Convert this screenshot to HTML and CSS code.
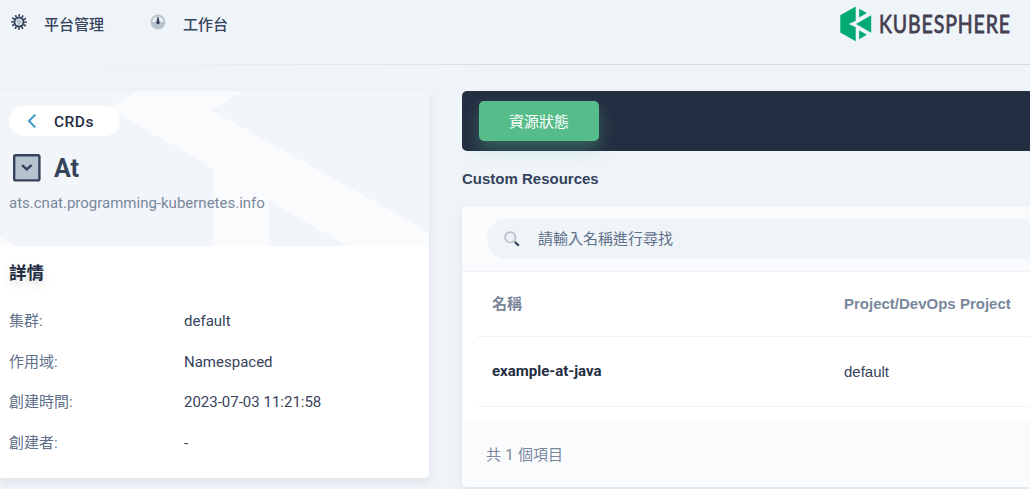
FILE: index.html
```html
<!DOCTYPE html>
<html lang="zh-Hant">
<head>
<meta charset="utf-8">
<title>KubeSphere</title>
<link rel="stylesheet" href="styles.css">
</head>
<body>
<header class="header">
  <nav class="nav">
    <a class="nav-item">
      <svg class="nav-icon" viewBox="0 0 16 16"><circle cx="8" cy="8" r="6.6" fill="none" stroke="#36435c" stroke-width="2.4" stroke-dasharray="1.7 1.756" stroke-dashoffset=".85"/><circle cx="8" cy="8" r="4.6" fill="#e5eaf0" stroke="#36435c" stroke-width="2"/><circle cx="8" cy="8" r="2.4" fill="#b6c2cd"/></svg>
      <span>平台管理</span>
    </a>
    <a class="nav-item">
      <svg class="nav-icon" viewBox="0 0 16 16"><circle cx="8" cy="8" r="7.4" fill="#b6c2cd"/><path d="M2.2 8a5.8 5.8 0 0 1 11.6 0z" fill="#e8edf3"/><path d="M7.6 2.8h.8l1.3 5.7a1.7 1.7 0 1 1-3.4 0z" fill="#36435c"/></svg>
      <span>工作台</span>
    </a>
  </nav>
  <svg class="logo" viewBox="0 0 176 36">
    <g fill="#00aa72"><path d="M15.7.5v14.3L8.7 18l7 3.3v14L.3 26.6V9.2z"/><path d="M19.1 2.7 26.8 7.1 19.1 11.6z"/><path d="M31.2 9.2v17.5L16 18z"/><path d="M19.1 24.3 26.8 28.8 19.1 33.2z"/></g>
    <text class="wordmark" transform="translate(39 27) scale(.78 1)" textLength="168" lengthAdjust="spacing">KUBESPHERE</text>
  </svg>
</header>
<main class="content">
  <aside class="detail">
    <div class="hero">
      <svg class="hero-mark" viewBox="0 0 429 155"><path d="M108 17 138 0H244L211 19 429 141v14h-81l-79-45v45h-56V77zM0 146l16 9H0z" fill="#fafbfd"/></svg>
      <a class="back"><svg class="back-icon" viewBox="0 0 10 16"><path d="M8.3 1.6 2 8l6.3 6.4" fill="none" stroke="#3d95c8" stroke-width="2"/></svg><span class="back-label">CRDs</span></a>
      <h1 class="name"><svg class="name-icon" viewBox="0 0 28 28"><rect x="1.2" y="1.2" width="25.2" height="25.2" rx="1.5" fill="#b6c2cd" stroke="#36435c" stroke-width="2.4"/><path d="m9 11.2 4.8 4.3 4.8-4.3" fill="none" stroke="#36435c" stroke-width="2.4"/></svg><span class="name-label">At</span></h1>
      <p class="desc">ats.cnat.programming-kubernetes.info</p>
    </div>
    <div class="attrs">
      <h2 class="attrs-title">詳情</h2>
      <dl class="attr-list">
        <dt>集群:</dt><dd>default</dd>
        <dt>作用域:</dt><dd>Namespaced</dd>
        <dt>創建時間:</dt><dd>2023-07-03 11:21:58</dd>
        <dt>創建者:</dt><dd>-</dd>
      </dl>
    </div>
  </aside>
  <section class="resources">
    <div class="tabs"><button class="tab">資源狀態</button></div>
    <h3 class="section-title">Custom Resources</h3>
    <div class="table-card">
      <div class="toolbar">
        <div class="search">
          <svg class="search-icon" viewBox="0 0 16 16"><circle cx="6.3" cy="6.3" r="5.2" fill="#eef1f5" stroke="#b6bfca" stroke-width="1.7"/><path d="m10 10 1.8 1.8" stroke="#b6bfca" stroke-width="1.5"/><path d="m11 11 3.8 3.8" stroke="#36435c" stroke-width="2.3"/></svg>
          <span>請輸入名稱進行尋找</span>
        </div>
      </div>
      <div class="table">
        <div class="row row-head"><span>名稱</span><span>Project/DevOps Project</span></div>
        <div class="row"><strong>example-at-java</strong><span class="project">default</span></div>
      </div>
      <div class="footer">共 1 個項目</div>
    </div>
  </section>
</main>
</body>
</html>
```
FILE: styles.css
```css
* { box-sizing: border-box; }
body {
  margin: 0;
  width: 1030px;
  height: 489px;
  overflow: hidden;
  background: #eff4f9;
  color: #242e42;
  font: 15px/20px Roboto, "Noto Sans CJK TC", sans-serif;
}
h1, h2, h3, p, dl, dd { margin: 0; }

.header {
  display: flex;
  justify-content: space-between;
  height: 65px;
  padding: 6px 14px 0 11px;
  border-bottom: 1px solid;
  border-image: linear-gradient(90deg, #eff4f9 10%, #d8dee5 50%, #d5dbe3) 1;
}
.nav { display: flex; gap: 46px; padding-top: 8px; }
.nav-item { display: flex; gap: 17px; height: 22px; font-weight: 500; line-height: 22px; color: #36435c; }
.nav-icon { width: 16px; height: 16px; }
.logo { width: 176px; height: 36px; overflow: visible; }
.wordmark { font: 400 25px Lato, sans-serif; fill: #453f52; stroke: #453f52; stroke-width: .8px; stroke-linejoin: round; }

.content { display: flex; gap: 33px; padding-top: 26px; }
.detail {
  flex: none;
  width: 429px;
  height: 387px;
  border-radius: 0 5px 5px 0;
  overflow: hidden;
  background: #fff;
  box-shadow: 0 5px 10px rgba(36, 46, 66, .08);
}
.hero { position: relative; height: 155px; padding: 15px 9px 0; background: #f2f5fa; }
.hero-mark { position: absolute; inset: 0; width: 429px; height: 155px; }
.back {
  position: relative;
  display: flex;
  align-items: center;
  gap: 17px;
  width: 111px;
  height: 30px;
  padding-left: 18px;
  border-radius: 15px;
  background: #fff;
  font-size: 15.5px;
  font-weight: 500;
  letter-spacing: .5px;
}
.back-label { padding-top: 2px; }
.back-icon { width: 10px; height: 16px; }
.name {
  position: relative;
  display: flex;
  align-items: center;
  gap: 13px;
  margin-top: 17px;
  padding-left: 4px;
  height: 30px;
  font-size: 25px;
  font-weight: 700;
  color: #36435c;
}
.name-label { padding-top: 2px; }
.name-icon { width: 28px; height: 28px; }
.desc { position: relative; margin-top: 10px; color: #79879c; }
.attrs { padding: 15px 9px; }
.attrs-title { height: 24px; font-size: 17.5px; line-height: 24px; text-shadow: 0 4px 8px rgba(36, 46, 66, .15); }
.attr-list { display: grid; grid-template-columns: 175px 1fr; grid-auto-rows: 20px; row-gap: 20.6px; margin-top: 26px; }
.attr-list dt { color: #5f708a; }
.attr-list dd { color: #36435c; }

.resources { flex: 1; min-width: 0; }
.tabs {
  height: 60px;
  padding: 10px 17px;
  border-radius: 5px 0 0 5px;
  background: #242e42;
}
.tab {
  width: 120px;
  height: 40px;
  padding: 0 0 2px;
  border: 0;
  border-radius: 5px;
  background: #55bc8a;
  box-shadow: 0 8px 16px rgba(85, 188, 138, .36);
  color: #fff;
  font: 15px "Noto Sans CJK TC", sans-serif;
}
.section-title { margin: 18px 0 17px; font: 700 15px/20px "Liberation Sans", sans-serif; color: #36435c; }
.table-card {
  border-radius: 5px 0 0 5px;
  overflow: hidden;
  background: #fff;
  box-shadow: 0 4px 8px rgba(36, 46, 66, .08);
}
.toolbar { height: 66px; padding: 13px 0 0 25px; border-bottom: 1px solid #eff2f7; background: #f9fbfd; }
.search {
  display: flex;
  align-items: center;
  gap: 18px;
  height: 40px;
  padding-left: 17px;
  border-radius: 20px 0 0 20px;
  background: #eff4f9;
  color: #5f708a;
}
.search-icon { width: 16px; height: 16px; }
.table { padding: 0 0 14px 15px; }
.row {
  display: grid;
  grid-template-columns: 352px 1fr;
  align-items: center;
  height: 70px;
  padding-left: 15px;
  border-bottom: 1px solid #eff2f7;
}
.row-head { height: 65px; font: 700 15px/20px "Liberation Sans", "Noto Sans CJK TC", sans-serif; color: #79879c; }
.row strong { padding-bottom: 2px; font-weight: 700; }
.project { font-family: "Liberation Sans", sans-serif; color: #36435c; }
.footer { height: 66px; padding: 24px 24px; background: #f9fbfd; color: #79879c; word-spacing: .6px; }
```
